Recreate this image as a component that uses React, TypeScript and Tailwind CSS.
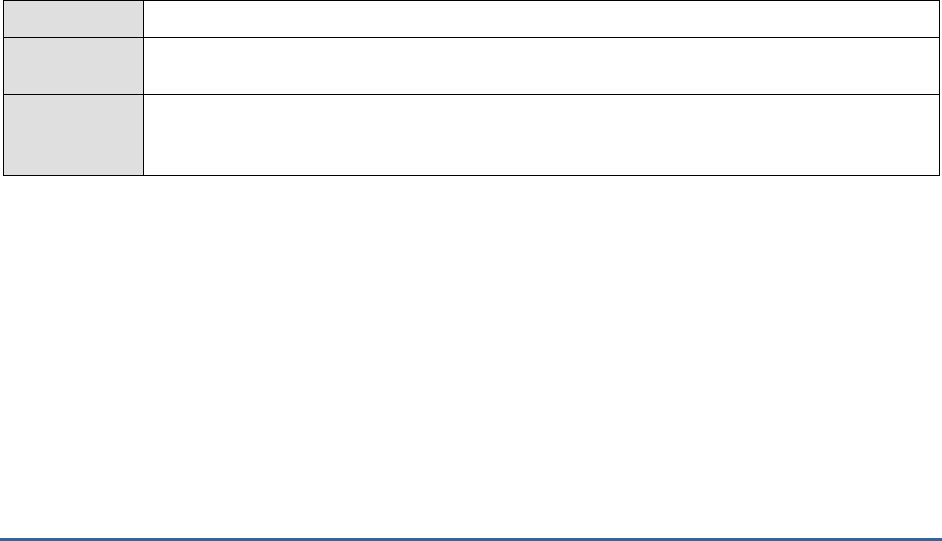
export default function App() {
  const rows = [36, 57, 81];
  return (
    <div className="flex h-[541px] w-[942px] flex-col bg-white" style={{ fontFamily: '"Liberation Sans", Arial, sans-serif' }}>
      <div className="ml-[3px] w-[937px] border border-black">
        {rows.map((h, i) => (
          <div key={i} className={`flex ${i > 0 ? "border-t border-black" : ""}`} style={{ height: h }}>
            <div className="w-[140px] shrink-0 border-r border-black bg-[#dfdfdf]" />
            <div className="flex-1 bg-white" />
          </div>
        ))}
      </div>
      <div className="mt-auto h-[3px] w-full bg-[#34659a]" />
    </div>
  );
}
